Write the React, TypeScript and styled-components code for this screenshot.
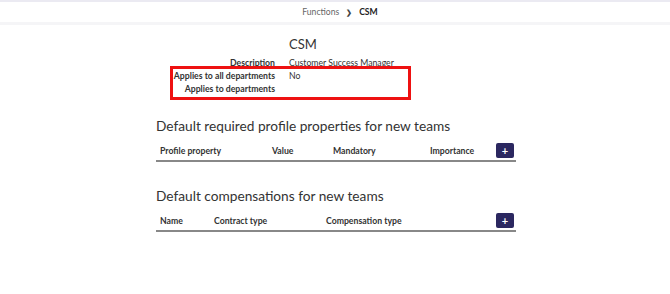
import React from "react";
import styled, { createGlobalStyle } from "styled-components";

const Global = createGlobalStyle`
  html, body { margin: 0; padding: 0; background: #fff; }
  body { font-family: Lato, "Open Sans", sans-serif; color: #333; }
`;

const TopStrip = styled.div`
  height: 2px;
  background: #ebeaf2;
`;

const Header = styled.header`
  height: 20px;
  display: flex;
  align-items: center;
  justify-content: center;
  gap: 7px;
  padding-left: 10px;
  font-size: 8.6px;
  border-bottom: 3px solid #f5f5f7;
`;

const Crumb = styled.span<{ $current?: boolean }>`
  color: ${(p) => (p.$current ? "#222" : "#666")};
  font-weight: ${(p) => (p.$current ? 700 : 400)};
`;

const Sep = styled.span`
  color: #444;
  font-size: 7px;
  font-weight: 700;
`;

const Main = styled.main`
  width: 360px;
  margin: 0 auto;
  padding-left: 2px;
  display: flex;
  flex-direction: column;
`;

const Title = styled.h1`
  margin: 11px 0 0 133px;
  font-size: 13px;
  font-weight: 400;
  color: #333;
  line-height: 16px;
`;

const Details = styled.div`
  display: grid;
  grid-template-columns: 119px 1fr;
  column-gap: 14px;
  margin-top: 4px;
  font-size: 8.7px;
  line-height: 13px;
`;

const Label = styled.div`
  text-align: right;
  font-weight: 700;
  color: #333;
`;

const Value = styled.div`
  color: #333;
`;

const Highlight = styled.div`
  grid-column: 1 / span 2;
  display: grid;
  grid-template-columns: 119px 1fr;
  column-gap: 14px;
  position: relative;

  &::after {
    content: "";
    position: absolute;
    left: 14px;
    top: -3px;
    width: 241px;
    height: 34px;
    box-sizing: border-box;
    border: 3px solid #ee1111;
    pointer-events: none;
  }
`;

const Section = styled.section<{ $gap: number }>`
  margin-top: ${(p) => p.$gap}px;
`;

const Heading = styled.h2`
  margin: 0;
  font-size: 13.7px;
  font-weight: 400;
  color: #333;
  line-height: 18px;
`;

const TableHead = styled.div<{ $cols: string }>`
  display: grid;
  grid-template-columns: ${(p) => p.$cols};
  align-items: center;
  margin-top: 6px;
  padding: 2px 2px 2px 4px;
  border-bottom: 2px solid #888;
  font-size: 8.7px;
  font-weight: 700;
  color: #333;
  height: 15px;
`;

const AddButton = styled.button`
  width: 18px;
  height: 15px;
  padding: 0;
  border: none;
  border-radius: 2px;
  background: #2b2760;
  color: #fff;
  font-size: 11px;
  font-weight: 700;
  line-height: 15px;
  justify-self: end;
  font-family: Lato, sans-serif;
`;

export default function App() {
  return (
    <>
      <Global />
      <TopStrip />
      <Header>
        <Crumb>Functions</Crumb>
        <Sep>❯</Sep>
        <Crumb $current>CSM</Crumb>
      </Header>
      <Main>
        <Title>CSM</Title>
        <Details>
          <Label>Description</Label>
          <Value>Customer Success Manager</Value>
          <Highlight>
            <Label>Applies to all departments</Label>
            <Value>No</Value>
            <Label>Applies to departments</Label>
            <Value />
          </Highlight>
        </Details>
        <Section $gap={22}>
          <Heading>Default required profile properties for new teams</Heading>
          <TableHead $cols="112px 61px 97px 66px 1fr">
            <span>Profile property</span>
            <span>Value</span>
            <span>Mandatory</span>
            <span>Importance</span>
            <AddButton>+</AddButton>
          </TableHead>
        </Section>
        <Section $gap={25}>
          <Heading>Default compensations for new teams</Heading>
          <TableHead $cols="54px 112px 1fr 30px">
            <span>Name</span>
            <span>Contract type</span>
            <span>Compensation type</span>
            <AddButton>+</AddButton>
          </TableHead>
        </Section>
      </Main>
    </>
  );
}
